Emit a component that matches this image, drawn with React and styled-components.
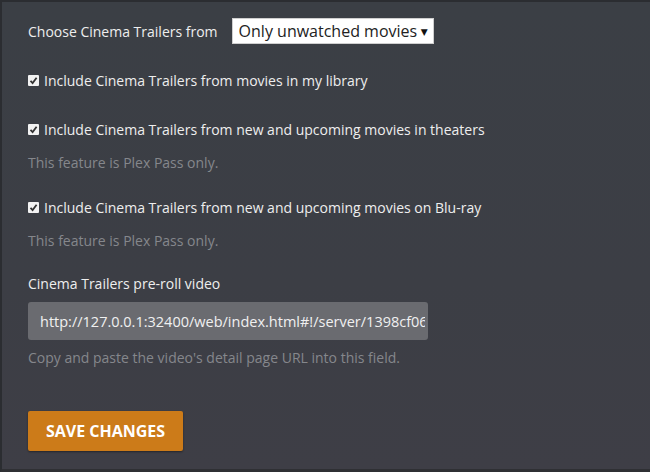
import styled, { createGlobalStyle } from 'styled-components';

const GlobalStyle = createGlobalStyle`
  html, body {
    margin: 0;
    padding: 0;
    background: #3b3e44;
  }
  * {
    box-sizing: border-box;
  }
`;

const Page = styled.div`
  width: 650px;
  height: 472px;
  background: linear-gradient(180deg, #3b3f45 0%, #3c3e45 60%, #3e3e46 100%);
  border-left: 2px solid #2b2d31;
  border-top: 2px solid #2b2d31;
  border-bottom: 3px solid #2f3034;
  padding: 16px 0 0 26px;
  font-family: 'Open Sans', 'DejaVu Sans', sans-serif;
  color: #eeeeee;
  overflow: hidden;
`;

const ChooseRow = styled.div`
  display: flex;
  align-items: center;
  gap: 14px;
  height: 26px;
  font-size: 14px;
`;

const Select = styled.div`
  display: flex;
  align-items: center;
  justify-content: space-between;
  width: 202px;
  height: 26px;
  padding: 0 5px 0 6px;
  background: #ffffff;
  color: #222;
  font-size: 16px;
  border: 1px solid #cfcfcf;
`;

const Arrow = styled.span`
  font-size: 9px;
  color: #111;
`;

const Option = styled.div`
  display: flex;
  align-items: center;
  gap: 5px;
  height: 20px;
  font-size: 14px;
  margin-top: ${(p) => p.$top}px;
`;

const Box = styled.span`
  display: inline-flex;
  align-items: center;
  justify-content: center;
  width: 11px;
  height: 11px;
  background: #f2f2f2;
  border-radius: 1px;
`;

const Note = styled.div`
  font-size: 14px;
  color: #85878c;
  margin-top: ${(p) => p.$top}px;
`;

const FieldLabel = styled.div`
  font-size: 14px;
  margin-top: ${(p) => p.$top}px;
`;

const UrlInput = styled.div`
  width: 400px;
  height: 38px;
  margin-top: 9px;
  padding: 0 3px 0 12px;
  display: flex;
  align-items: center;
  background: #6a6b70;
  border-radius: 3px;
  font-size: 14.5px;
  color: #f0f0f0;
  white-space: nowrap;
  overflow: hidden;
`;

const UrlText = styled.span`
  overflow: hidden;
`;

const SaveButton = styled.button`
  margin-top: 44px;
  width: 155px;
  height: 40px;
  background: #cc7b19;
  border: none;
  border-radius: 2px;
  color: #fff;
  font-family: 'Open Sans', 'DejaVu Sans', sans-serif;
  font-weight: 700;
  font-size: 16px;
  text-transform: uppercase;
  box-shadow: 0 1px 2px rgba(0, 0, 0, 0.4);
`;

function Check() {
  return (
    <Box>
      <svg width="9" height="9" viewBox="0 0 9 9">
        <path d="M1.5 4.8 L3.6 7 L7.6 1.8" fill="none" stroke="#333" strokeWidth="1.8" />
      </svg>
    </Box>
  );
}

export default function App() {
  return (
    <Page>
      <GlobalStyle />
      <ChooseRow>
        <span>Choose Cinema Trailers from</span>
        <Select>
          <span>Only unwatched movies</span>
          <Arrow>▼</Arrow>
        </Select>
      </ChooseRow>
      <Option $top={26}>
        <Check />
        <span>Include Cinema Trailers from movies in my library</span>
      </Option>
      <Option $top={29}>
        <Check />
        <span>Include Cinema Trailers from new and upcoming movies in theaters</span>
      </Option>
      <Note $top={14}>This feature is Plex Pass only.</Note>
      <Option $top={25}>
        <Check />
        <span>Include Cinema Trailers from new and upcoming movies on Blu-ray</span>
      </Option>
      <Note $top={14}>This feature is Plex Pass only.</Note>
      <FieldLabel $top={24}>Cinema Trailers pre-roll video</FieldLabel>
      <UrlInput>
        <UrlText>http://127.0.0.1:32400/web/index.html#!/server/1398cf063a</UrlText>
      </UrlInput>
      <Note $top={8}>Copy and paste the video's detail page URL into this field.</Note>
      <SaveButton>Save Changes</SaveButton>
    </Page>
  );
}
